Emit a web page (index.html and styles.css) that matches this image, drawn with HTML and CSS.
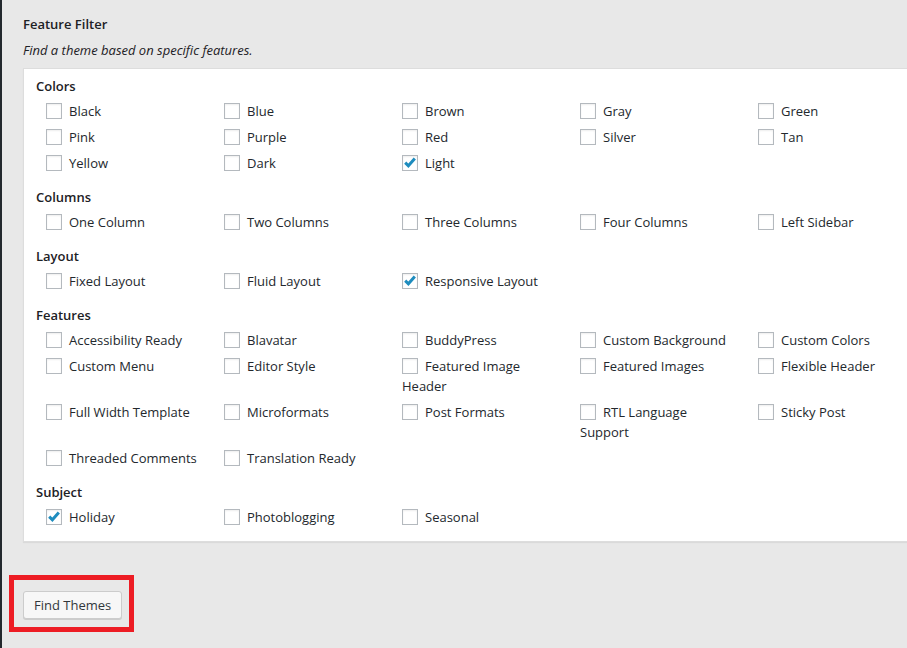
FILE: index.html
```html
<!DOCTYPE html>
<html>
<head>
<meta charset="utf-8">
<link rel="stylesheet" href="styles.css">
</head>
<body>
<div class="page">
  <h4 class="title">Feature Filter</h4>
  <p class="desc">Find a theme based on specific features.</p>
  <div class="panel">
    <div class="group">
      <div class="gtitle">Colors</div>
      <div class="items">
        <label class="item"><span class="cb"></span>Black</label>
        <label class="item"><span class="cb"></span>Blue</label>
        <label class="item"><span class="cb"></span>Brown</label>
        <label class="item"><span class="cb"></span>Gray</label>
        <label class="item"><span class="cb"></span>Green</label>
        <label class="item"><span class="cb"></span>Pink</label>
        <label class="item"><span class="cb"></span>Purple</label>
        <label class="item"><span class="cb"></span>Red</label>
        <label class="item"><span class="cb"></span>Silver</label>
        <label class="item"><span class="cb"></span>Tan</label>
        <label class="item"><span class="cb"></span>Yellow</label>
        <label class="item"><span class="cb"></span>Dark</label>
        <label class="item"><span class="cb"><svg viewBox="0 0 16 16" width="16" height="16"><polyline points="3.2,7.6 6.4,10.8 12.8,3.6" fill="none" stroke="#1e8cbe" stroke-width="3"/></svg></span>Light</label>
      </div>
    </div>
    <div class="group">
      <div class="gtitle">Columns</div>
      <div class="items">
        <label class="item"><span class="cb"></span>One Column</label>
        <label class="item"><span class="cb"></span>Two Columns</label>
        <label class="item"><span class="cb"></span>Three Columns</label>
        <label class="item"><span class="cb"></span>Four Columns</label>
        <label class="item"><span class="cb"></span>Left Sidebar</label>
      </div>
    </div>
    <div class="group">
      <div class="gtitle">Layout</div>
      <div class="items">
        <label class="item"><span class="cb"></span>Fixed Layout</label>
        <label class="item"><span class="cb"></span>Fluid Layout</label>
        <label class="item"><span class="cb"><svg viewBox="0 0 16 16" width="16" height="16"><polyline points="3.2,7.6 6.4,10.8 12.8,3.6" fill="none" stroke="#1e8cbe" stroke-width="3"/></svg></span>Responsive Layout</label>
      </div>
    </div>
    <div class="group">
      <div class="gtitle">Features</div>
      <div class="items">
        <label class="item"><span class="cb"></span>Accessibility Ready</label>
        <label class="item"><span class="cb"></span>Blavatar</label>
        <label class="item"><span class="cb"></span>BuddyPress</label>
        <label class="item"><span class="cb"></span>Custom Background</label>
        <label class="item"><span class="cb"></span>Custom Colors</label>
        <label class="item"><span class="cb"></span>Custom Menu</label>
        <label class="item"><span class="cb"></span>Editor Style</label>
        <label class="item"><span class="cb"></span>Featured Image Header</label>
        <label class="item"><span class="cb"></span>Featured Images</label>
        <label class="item"><span class="cb"></span>Flexible Header</label>
        <label class="item"><span class="cb"></span>Full Width Template</label>
        <label class="item"><span class="cb"></span>Microformats</label>
        <label class="item"><span class="cb"></span>Post Formats</label>
        <label class="item"><span class="cb"></span>RTL Language Support</label>
        <label class="item"><span class="cb"></span>Sticky Post</label>
        <label class="item"><span class="cb"></span>Threaded Comments</label>
        <label class="item"><span class="cb"></span>Translation Ready</label>
      </div>
    </div>
    <div class="group last">
      <div class="gtitle">Subject</div>
      <div class="items">
        <label class="item"><span class="cb"><svg viewBox="0 0 16 16" width="16" height="16"><polyline points="3.2,7.6 6.4,10.8 12.8,3.6" fill="none" stroke="#1e8cbe" stroke-width="3"/></svg></span>Holiday</label>
        <label class="item"><span class="cb"></span>Photoblogging</label>
        <label class="item"><span class="cb"></span>Seasonal</label>
      </div>
    </div>
  </div>
  <div class="highlight">
    <button class="btn">Find Themes</button>
  </div>
</div>
</body>
</html>
```

FILE: styles.css
```css
html, body {
  margin: 0;
  padding: 0;
  height: 100%;
}
body {
  background: #e8e8e8;
  font-family: "Open Sans", "Liberation Sans", sans-serif;
  font-size: 13px;
  color: #444;
  overflow: hidden;
}
.page {
  border-left: 2px solid #23282d;
  min-height: 100%;
  box-sizing: border-box;
  padding: 14px 0 0 21px;
}
.title {
  margin: 0;
  font-size: 13px;
  font-weight: 600;
  line-height: 20px;
  color: #1d2125;
}
.desc {
  margin: 6px 0 0 0;
  font-style: italic;
  line-height: 20px;
  color: #1d2125;
}
.panel {
  margin-top: 8px;
  width: 920px;
  background: #fff;
  border: 1px solid #ddd;
  box-shadow: 0 1px 1px rgba(0,0,0,0.06);
  padding: 7px 0 8px 12px;
}
.group {
  margin-bottom: 8px;
}
.group.last {
  margin-bottom: 0;
}
.gtitle {
  font-weight: 600;
  line-height: 20px;
  color: #1d2125;
  margin-bottom: 5px;
}
.items {
  display: flex;
  flex-wrap: wrap;
  width: 890px;
  padding-left: 10px;
}
.item {
  width: 155px;
  margin-right: 23px;
  margin-bottom: 6px;
  line-height: 20px;
  color: #23282d;
}
.cb {
  display: inline-block;
  box-sizing: border-box;
  width: 16px;
  height: 16px;
  border: 1px solid #b4b9be;
  background: #fff;
  box-shadow: inset 0 1px 2px rgba(0,0,0,0.07);
  vertical-align: -3px;
  margin-right: 7px;
  position: relative;
}
.cb svg {
  position: absolute;
  left: -1px;
  top: -1px;
}
.highlight {
  display: inline-block;
  margin-top: 33px;
  margin-left: -14px;
  border: 5px solid #ed1c24;
  padding: 11px 7px 8px 9px;
}
.btn {
  display: block;
  height: 28px;
  box-sizing: border-box;
  padding: 0 10px;
  white-space: nowrap;
  font-family: "Open Sans", "Liberation Sans", sans-serif;
  font-size: 13px;
  line-height: 26px;
  color: #32373c;
  background: #f7f7f7;
  border: 1px solid #ccc;
  border-radius: 3px;
  box-shadow: 0 1px 0 #ccc;
}
```
